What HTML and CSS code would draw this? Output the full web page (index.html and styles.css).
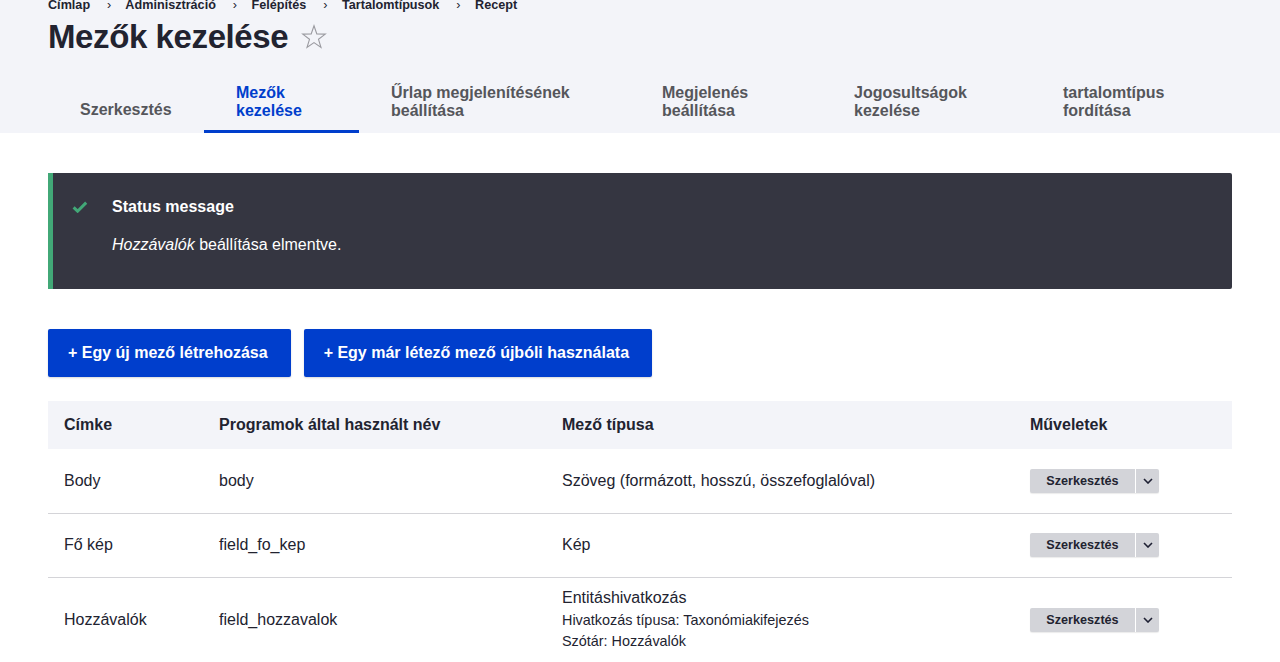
FILE: index.html
```html
<!DOCTYPE html>
<html lang="hu">
<head>
<meta charset="utf-8">
<title>Mezők kezelése</title>
<link rel="stylesheet" href="styles.css">
</head>
<body>
<header class="page-header">
  <nav class="breadcrumb">
    <a class="crumb" href="#">Címlap</a><span class="sep">›</span>
    <a class="crumb" href="#">Adminisztráció</a><span class="sep">›</span>
    <a class="crumb" href="#">Felépítés</a><span class="sep">›</span>
    <a class="crumb" href="#">Tartalomtípusok</a><span class="sep">›</span>
    <a class="crumb" href="#">Recept</a>
  </nav>
  <div class="title-row">
    <h1 class="page-title">Mezők kezelése</h1>
    <svg class="star" width="26" height="26" viewBox="0 0 26 26" aria-hidden="true">
      <path d="M13 1.8 L15.8 9.9 L24.3 10.1 L17.5 15.3 L20 23.5 L13 18.6 L6 23.5 L8.5 15.3 L1.7 10.1 L10.2 9.9 Z" fill="none" stroke="#9a9aa0" stroke-width="1.1" stroke-linejoin="miter"/>
    </svg>
  </div>
  <nav class="tabs">
    <a class="tab tab-1" href="#">Szerkesztés</a>
    <a class="tab tab-2 is-active" href="#">Mezők<br>kezelése</a>
    <a class="tab tab-3" href="#">Űrlap megjelenítésének<br>beállítása</a>
    <a class="tab tab-4" href="#">Megjelenés<br>beállítása</a>
    <a class="tab tab-5" href="#">Jogosultságok<br>kezelése</a>
    <a class="tab tab-6" href="#">tartalomtípus<br>fordítása</a>
  </nav>
</header>

<main class="content">
  <div class="messages">
    <svg class="msg-icon" width="16" height="12" viewBox="0 0 16 12" aria-hidden="true">
      <path d="M1.6 6.4 L5.6 10.2 L14.2 1.6" fill="none" stroke="#42a877" stroke-width="3"/>
    </svg>
    <div class="msg-body">
      <h2 class="msg-title">Status message</h2>
      <p class="msg-text"><em>Hozzávalók</em> beállítása elmentve.</p>
    </div>
  </div>

  <div class="actions">
    <a class="button" href="#">+ Egy új mező létrehozása</a>
    <a class="button" href="#">+ Egy már létező mező újbóli használata</a>
  </div>

  <table class="fields">
    <colgroup>
      <col class="col-label">
      <col class="col-machine">
      <col class="col-type">
      <col class="col-ops">
    </colgroup>
    <thead>
      <tr><th>Címke</th><th>Programok által használt név</th><th>Mező típusa</th><th>Műveletek</th></tr>
    </thead>
    <tbody>
      <tr>
        <td>Body</td><td>body</td><td>Szöveg (formázott, hosszú, összefoglalóval)</td>
        <td><div class="dropbutton"><span class="db-main">Szerkesztés</span><span class="db-toggle"><svg width="10" height="6" viewBox="0 0 10 6"><path d="M1 1 L5 5 L9 1" fill="none" stroke="#1e2033" stroke-width="1.6"/></svg></span></div></td>
      </tr>
      <tr>
        <td>Fő kép</td><td>field_fo_kep</td><td>Kép</td>
        <td><div class="dropbutton"><span class="db-main">Szerkesztés</span><span class="db-toggle"><svg width="10" height="6" viewBox="0 0 10 6"><path d="M1 1 L5 5 L9 1" fill="none" stroke="#1e2033" stroke-width="1.6"/></svg></span></div></td>
      </tr>
      <tr>
        <td>Hozzávalók</td><td>field_hozzavalok</td>
        <td><div class="type-main">Entitáshivatkozás</div>
          <ul class="type-summary"><li>Hivatkozás típusa: Taxonómiakifejezés</li><li>Szótár: Hozzávalók</li></ul></td>
        <td><div class="dropbutton"><span class="db-main">Szerkesztés</span><span class="db-toggle"><svg width="10" height="6" viewBox="0 0 10 6"><path d="M1 1 L5 5 L9 1" fill="none" stroke="#1e2033" stroke-width="1.6"/></svg></span></div></td>
      </tr>
    </tbody>
  </table>
</main>
</body>
</html>
```
FILE: styles.css
```css
* { box-sizing: border-box; }
html, body { margin: 0; padding: 0; }
body {
  font-family: "Liberation Sans", Arial, sans-serif;
  font-size: 16px;
  color: #222330;
  background: #fff;
  overflow: hidden;
}
a { text-decoration: none; color: inherit; }

.page-header {
  background: #f3f4f9;
  padding: 0 48px;
}
.breadcrumb {
  margin-top: -5px;
  height: 20px;
  line-height: 20px;
  font-size: 12.64px;
  font-weight: bold;
  color: #222330;
  white-space: nowrap;
}
.sep {
  display: inline-block;
  margin: 0 11px 0 17px;
  color: #222330;
  font-weight: normal;
}
.title-row {
  display: flex;
  align-items: center;
  margin-top: 2px;
  height: 40px;
}
.page-title {
  margin: 0;
  font-size: 33px;
  line-height: 40px;
  font-weight: bold;
  letter-spacing: -0.4px;
  color: #222330;
}
.star { margin-left: 13px; margin-top: -1px; }

.tabs {
  display: flex;
  margin-top: 16px;
}
.tab {
  display: flex;
  align-items: flex-end;
  height: 60px;
  padding: 0 32px 10px;
  font-weight: bold;
  font-size: 16px;
  line-height: 18px;
  color: #55565b;
  border-bottom: 3px solid transparent;
  flex: 0 0 auto;
}
.tab.is-active { color: #003ecc; border-bottom-color: #003ecc; }
.tab-1 { width: 156px; padding-bottom: 11px; }
.tab-2 { width: 155px; }
.tab-3 { width: 271px; }
.tab-4 { width: 192px; }
.tab-5 { width: 209px; }
.tab-6 { width: 201px; }

.content { padding: 40px 48px 0; }

.messages {
  display: flex;
  background: #353641;
  border-left: 5px solid #42a877;
  border-radius: 0 2px 2px 0;
  color: #fff;
  padding: 24px 24px 33px 19px;
  min-height: 116px;
}
.msg-icon { margin: 4px 24px 0 0; flex: 0 0 auto; }
.msg-title {
  margin: 0 0 17px;
  font-size: 16px;
  line-height: 20px;
  font-weight: bold;
}
.msg-text { margin: 0; line-height: 22px; }

.actions {
  display: flex;
  gap: 13px;
  margin-top: 40px;
}
.button {
  display: inline-flex;
  align-items: center;
  height: 48px;
  padding: 0 23px 0 20px;
  background: #003ecc;
  color: #fff;
  font-weight: bold;
  border-radius: 2px;
  box-shadow: 0 1px 2px rgba(0,0,0,0.15);
}

.fields {
  margin-top: 24px;
  width: 100%;
  border-collapse: collapse;
  table-layout: fixed;
}
.col-label { width: 155px; }
.col-machine { width: 343px; }
.col-type { width: 468px; }
.col-ops { width: 218px; }
.fields th {
  text-align: left;
  background: #f3f4f9;
  height: 48px;
  padding: 0 16px;
  font-weight: bold;
}
.fields td {
  height: 64px;
  padding: 10px 16px;
  border-bottom: 1px solid #d4d4d8;
  vertical-align: middle;
  line-height: 20px;
}
.type-main { line-height: 20px; }
.type-summary {
  list-style: none;
  margin: 2px 0 0;
  padding: 0;
  font-size: 14.4px;
  line-height: 21px;
}

.dropbutton {
  display: inline-flex;
  height: 24px;
  background: #d3d4d9;
  border-radius: 2px;
  box-shadow: 0 1px 1px rgba(0,0,0,0.08);
}
.db-main {
  width: 105px;
  text-align: center;
  font-size: 12.64px;
  font-weight: bold;
  line-height: 24px;
  color: #222330;
}
.db-toggle {
  width: 24px;
  border-left: 1px solid #fff;
  display: flex;
  align-items: center;
  justify-content: center;
}
```
